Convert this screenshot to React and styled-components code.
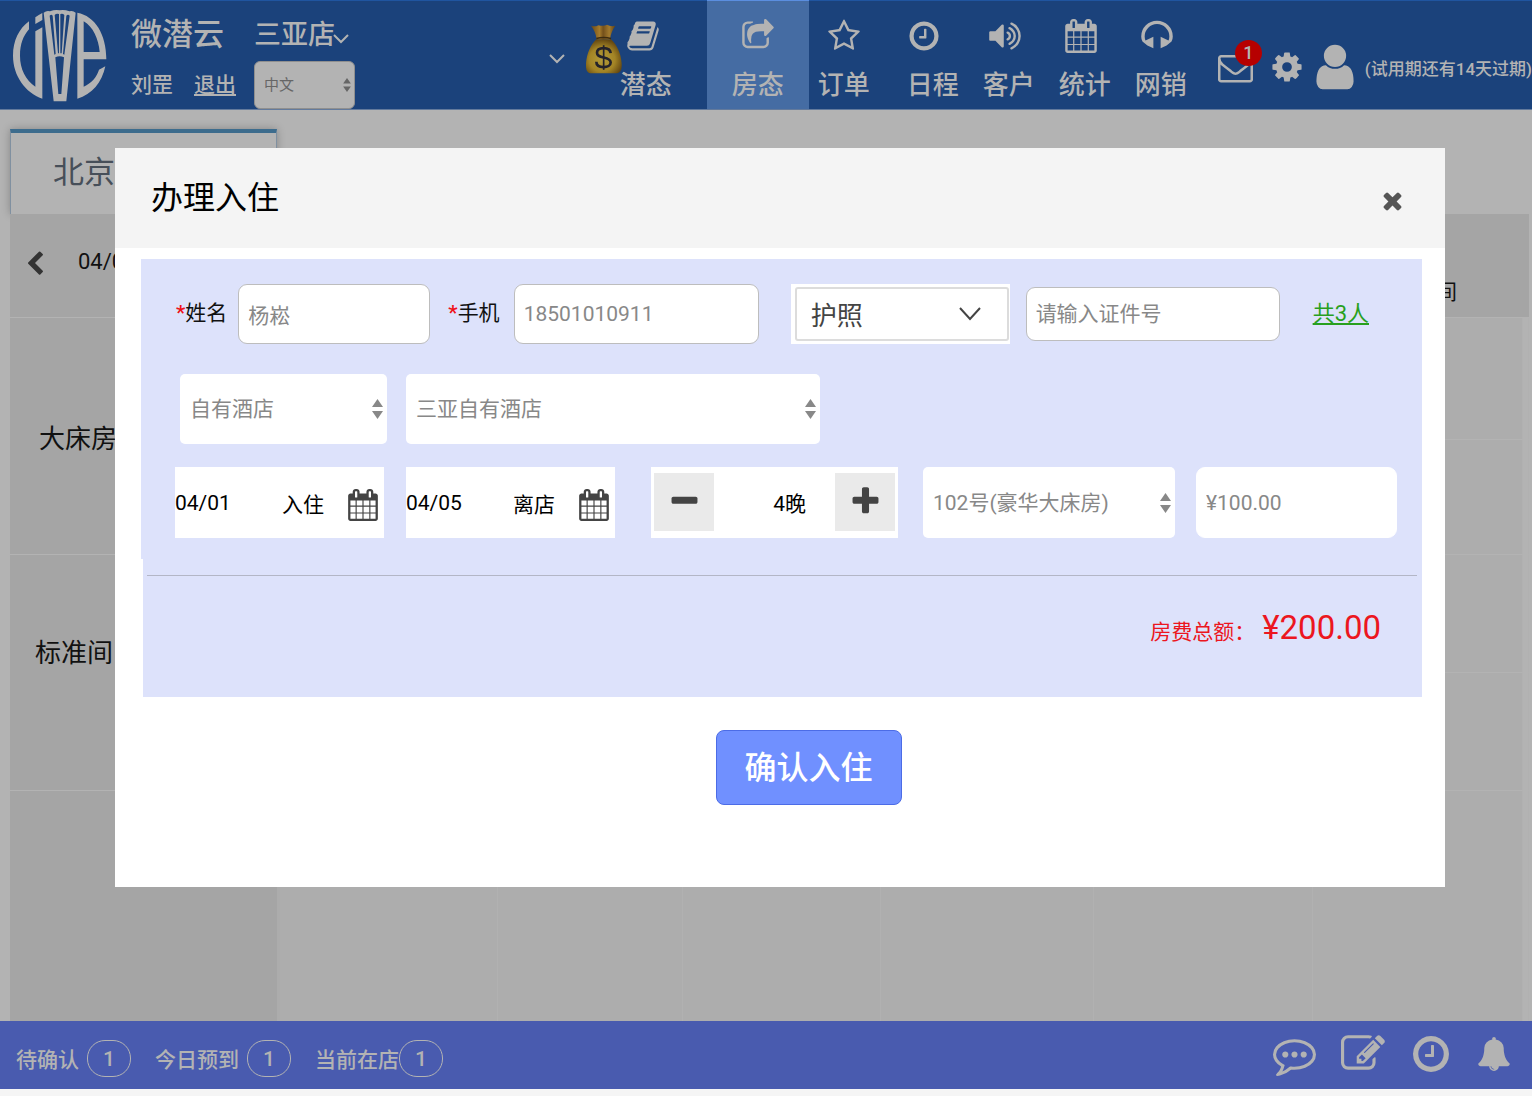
import React, { useState } from 'react';
import styled, { createGlobalStyle } from 'styled-components';

const paths = {
  book: 'M1703 478q40 57 18 129l-275 906q-19 64-76.5 107.5t-122.5 43.5h-923q-77 0-148.5-53.5t-99.5-131.5q-24-67-2-127 0-4 3-27t4-37q1-8-3-21.5t-3-19.5q2-11 8-21t16.5-23.5 16.5-23.5q23-38 45-91.5t30-91.5q3-10 .5-30t-.5-28q3-11 17-28t17-23q21-36 42-92t25-90q1-9-2.5-32t.5-28q4-13 22-30.5t22-22.5q19-26 42.5-84.5t27.5-96.5q1-8-3-25.5t-2-26.5q2-8 9-18t18-23 17-21q8-12 16.5-30.5t15-35 16-36 19.5-32 26.5-23.5 36-11.5 47.5 5.5l-1 3q38-9 51-9h761q74 0 114 56t18 130l-274 906q-36 119-71.5 153.5t-128.5 34.5h-869q-27 0-38 15-11 16-1 43 24 70 144 70h923q29 0 56-15.5t35-41.5l300-987q7-22 5-57 38 15 59 43zm-1064 2q-4 13 2 22.5t20 9.5h608q13 0 25.5-9.5t16.5-22.5l21-64q4-13-2-22.5t-20-9.5h-608q-13 0-25.5 9.5t-16.5 22.5zm-83 256q-4 13 2 22.5t20 9.5h608q13 0 25.5-9.5t16.5-22.5l21-64q4-13-2-22.5t-20-9.5h-608q-13 0-25.5 9.5t-16.5 22.5z',
  share: 'M1472 989v259q0 119-84.5 203.5t-203.5 84.5h-832q-119 0-203.5-84.5t-84.5-203.5v-832q0-119 84.5-203.5t203.5-84.5h255q13 0 22.5 9.5t9.5 22.5q0 27-26 32-77 26-133 60-10 4-16 4h-112q-66 0-113 47t-47 113v832q0 66 47 113t113 47h832q66 0 113-47t47-113v-214q0-19 18-29 28-13 54-37 16-16 35-8 21 9 21 29zm237-496l-384 384q-18 19-45 19-12 0-25-5-39-17-39-59v-192h-160q-323 0-438 131-119 137-74 473 3 23-20 34-8 2-12 2-16 0-26-13-10-14-21-31t-39.5-68.5-49.5-99.5-38.5-114-17.5-122q0-49 3.5-91t14-90 28-88 47-81.5 68.5-74 94.5-61.5 124.5-48.5 159.5-30.5 196.5-11h160v-192q0-42 39-59 13-5 25-5 26 0 45 19l384 384q19 19 19 45t-19 45z',
  star: 'M1201 1004l306-297-422-62-189-382-189 382-422 62 306 297-73 421 378-199 377 199zm527-357q0 22-26 48l-363 354 86 500q1 7 1 20 0 50-41 50-19 0-40-12l-449-236-449 236q-22 12-40 12-21 0-31.5-14.5t-10.5-35.5q0-6 2-20l86-500-364-354q-25-27-25-48 0-37 56-46l502-73 225-455q19-41 49-41t49 41l225 455 502 73q56 9 56 46z',
  clock: 'M1024 544v448q0 14-9 23t-23 9h-320q-14 0-23-9t-9-23v-64q0-14 9-23t23-9h224v-352q0-14 9-23t23-9h64q14 0 23 9t9 23zm416 352q0-148-73-273t-198-198-273-73-273 73-198 198-73 273 73 273 198 198 273 73 273-73 198-198 73-273zm224 0q0 209-103 385.5t-279.5 279.5-385.5 103-385.5-103-279.5-279.5-103-385.5 103-385.5 279.5-279.5 385.5-103 385.5 103 279.5 279.5 103 385.5z',
  volume: 'M832 352v1088q0 26-19 45t-45 19-45-19l-333-333h-262q-26 0-45-19t-19-45v-384q0-26 19-45t45-19h262l333-333q19-19 45-19t45 19 19 45zm384 544q0 76-42.5 141.5t-112.5 93.5q-10 5-25 5-26 0-45-18.5t-19-45.5q0-21 12-35.5t29-25 34-23 29-36 12-56.5-12-56.5-29-36-34-23-29-25-12-35.5q0-27 19-45.5t45-18.5q15 0 25 5 70 27 112.5 93t42.5 142zm256 0q0 153-85 282.5t-225 188.5q-13 5-25 5-27 0-46-19t-19-45q0-39 39-59 56-29 76-44 74-54 115.5-135.5t41.5-173.5-41.5-173.5-115.5-135.5q-20-15-76-44-39-20-39-59 0-26 19-45t45-19q13 0 26 5 140 59 225 188.5t85 282.5zm256 0q0 230-127 422.5t-338 283.5q-13 5-26 5-26 0-45-19t-19-45q0-36 39-59 7-4 22.5-10.5t22.5-10.5q46-25 82-51 123-91 192-227t69-289-69-289-192-227q-36-26-82-51-7-4-22.5-10.5t-22.5-10.5q-39-23-39-59 0-26 19-45t45-19q13 0 26 5 211 91 338 283.5t127 422.5z',
  calendar: 'M192 1664h288v-288h-288v288zm352 0h320v-288h-320v288zm-352-352h288v-320h-288v320zm352 0h320v-320h-320v320zm-352-384h288v-288h-288v288zm736 736h320v-288h-320v288zm-384-736h320v-288h-320v288zm768 736h288v-288h-288v288zm-384-352h320v-320h-320v320zm-352-864v-288q0-13-9.5-22.5t-22.5-9.5h-64q-13 0-22.5 9.5t-9.5 22.5v288q0 13 9.5 22.5t22.5 9.5h64q13 0 22.5-9.5t9.5-22.5zm736 864h288v-320h-288v320zm-384-384h320v-288h-320v288zm384 0h288v-288h-288v288zm32-480v-288q0-13-9.5-22.5t-22.5-9.5h-64q-13 0-22.5 9.5t-9.5 22.5v288q0 13 9.5 22.5t22.5 9.5h64q13 0 22.5-9.5t9.5-22.5zm384-64v1280q0 52-38 90t-90 38h-1408q-52 0-90-38t-38-90v-1280q0-52 38-90t90-38h128v-96q0-66 47-113t113-47h64q66 0 113 47t47 113v96h384v-96q0-66 47-113t113-47h64q66 0 113 47t47 113v96h128q52 0 90 38t38 90z',
  headphones: 'M64 920a832 832 0 0 1 1664 0Q1728 1070 1662 1190L1402 1400L1087 1545V930L1500 1130Q1546 1030 1546 920A650 650 0 0 0 246 920Q246 1030 292 1130L705 930V1545L390 1400L130 1190Q64 1070 64 920Z',
  envelope: 'M1664 1504v-768q-32 36-69 66-268 206-426 338-51 43-83 67t-86.5 48.5-102.5 24.5h-2q-48 0-102.5-24.5t-86.5-48.5-83-67q-158-132-426-338-37-30-69-66v768q0 13 9.5 22.5t22.5 9.5h1472q13 0 22.5-9.5t9.5-22.5zm0-1051v-24.5l-.5-13-3-12.5-5.5-9-9-7.5-14-2.5h-1472q-13 0-22.5 9.5t-9.5 22.5q0 168 147 284 193 152 401 317 6 5 35 29.5t46 37.5 44.5 31.5 50.5 27.5 43 9h2q20 0 43-9t50.5-27.5 44.5-31.5 46-37.5 35-29.5q208-165 401-317 54-43 100.5-115.5t46.5-131.5zm128-37v1088q0 66-47 113t-113 47h-1472q-66 0-113-47t-47-113v-1088q0-66 47-113t113-47h1472q66 0 113 47t47 113z',
  cog: 'M1152 896q0-106-75-181t-181-75-181 75-75 181 75 181 181 75 181-75 75-181zm512-109v222q0 12-8 23t-20 13l-185 28q-19 54-39 91 35 50 107 138 10 12 10 25t-9 23q-27 37-99 108t-94 71q-12 0-26-9l-138-108q-44 23-91 38-16 136-29 186-7 28-36 28h-222q-14 0-24.5-8.5t-11.5-21.5l-28-184q-49-16-90-37l-141 107q-10 9-25 9-14 0-25-11-126-114-165-168-7-10-7-23 0-12 8-23 15-21 51-66.5t54-70.5q-27-50-41-99l-183-27q-13-2-21-12.5t-8-23.5v-222q0-12 8-23t19-13l186-28q14-46 39-92-40-57-107-138-10-12-10-24 0-10 9-23 26-36 98.5-107.5t94.5-71.5q13 0 26 10l138 107q44-23 91-38 16-136 29-186 7-28 36-28h222q14 0 24.5 8.5t11.5 21.5l28 184q49 16 90 37l142-107q9-9 24-9 13 0 25 10 129 119 165 170 7 8 7 22 0 12-8 23-15 21-51 66.5t-54 70.5q26 50 41 98l183 28q13 2 21 12.5t8 23.5z',
  user: 'M1536 1399q0 109-62.5 187t-150.5 78h-854q-88 0-150.5-78t-62.5-187q0-85 8.5-160.5t31.5-152 58.5-131 94-89 134.5-34.5q131 128 313 128t313-128q76 0 134.5 34.5t94 89 58.5 131 31.5 152 8.5 160.5zm-256-887q0 159-112.5 271.5t-271.5 112.5-271.5-112.5-112.5-271.5 112.5-271.5 271.5-112.5 271.5 112.5 112.5 271.5z',
  comment: 'M640 896q0 53-37.5 90.5t-90.5 37.5-90.5-37.5-37.5-90.5 37.5-90.5 90.5-37.5 90.5 37.5 37.5 90.5zm384 0q0 53-37.5 90.5t-90.5 37.5-90.5-37.5-37.5-90.5 37.5-90.5 90.5-37.5 90.5 37.5 37.5 90.5zm384 0q0 53-37.5 90.5t-90.5 37.5-90.5-37.5-37.5-90.5 37.5-90.5 90.5-37.5 90.5 37.5 37.5 90.5zm-512-512q-204 0-381.5 69.5t-282 187.5-104.5 255q0 112 71.5 213.5t201.5 175.5l87 50-27 96q-24 91-70 172 152-63 275-171l43-38 57 6q69 8 130 8 204 0 381.5-69.5t282-187.5 104.5-255-104.5-255-282-187.5-381.5-69.5zm896 512q0 174-120 321.5t-326 233-450 85.5q-70 0-145-8-198 175-460 242-49 14-114 22h-5q-15 0-27-10.5t-16-27.5v-1q-3-4-.5-12t2-10 4.5-9.5l6-9 7-8.5 8-9q7-8 31-34.5t34.5-38 31-39.5 32.5-51 27-59 26-76q-157-89-247.5-220t-90.5-281q0-174 120-321.5t326-233 450-85.5 450 85.5 326 233 120 321.5z',
  edit: 'M888 1184l116-116-152-152-116 116v56h96v96h56zm440-720q-16-16-33 1l-350 350q-17 17-1 33t33-1l350-350q17-17 1-33zm80 594v190q0 119-84.5 203.5t-203.5 84.5h-832q-119 0-203.5-84.5t-84.5-203.5v-832q0-119 84.5-203.5t203.5-84.5h832q63 0 117 25 15 7 18 23 3 17-9 29l-49 49q-14 14-32 8-23-6-45-6h-832q-66 0-113 47t-47 113v832q0 66 47 113t113 47h832q66 0 113-47t47-113v-126q0-13 9-22l64-64q15-15 35-7t20 29zm-96-738l288 288-672 672h-288v-288zm444 132l-92 92-288-288 92-92q28-28 68-28t68 28l152 152q28 28 28 68t-28 68z',
  bell: 'M912 1696q0-16-16-16-59 0-101.5-42.5t-42.5-101.5q0-16-16-16t-16 16q0 73 51.5 124.5t124.5 51.5q16 0 16-16zm816-288q0 52-38 90t-90 38h-448q0 106-75 181t-181 75-181-75-75-181h-448q-52 0-90-38t-38-90q50-42 91-88t85-119.5 74.5-158.5 50-206 19.5-260q0-152 117-282.5t307-158.5q-8-19-8-39 0-40 28-68t68-28 68 28 28 68q0 20-8 39 190 28 307 158.5t117 282.5q0 139 19.5 260t50 206 74.5 158.5 85 119.5 91 88z',
  times: 'M1490 1322q0 40-28 68l-136 136q-28 28-68 28t-68-28l-294-294-294 294q-28 28-68 28t-68-28l-136-136q-28-28-28-68t28-68l294-294-294-294q-28-28-28-68t28-68l136-136q28-28 68-28t68 28l294 294 294-294q28-28 68-28t68 28l136 136q28 28 28 68t-28 68l-294 294 294 294q28 28 28 68z',
  plus: 'M1600 736v192q0 40-28 68t-68 28h-416v416q0 40-28 68t-68 28h-192q-40 0-68-28t-28-68v-416h-416q-40 0-68-28t-28-68v-192q0-40 28-68t68-28h416v-416q0-40 28-68t68-28h192q40 0 68 28t28 68v416h416q40 0 68 28t28 68z',
  minus: 'M1600 736v192q0 40-28 68t-68 28h-1216q-40 0-68-28t-28-68v-192q0-40 28-68t68-28h1216q40 0 68 28t28 68z',
  left: 'M1427 301l-531 531 531 531q19 19 19 45t-19 45l-166 166q-19 19-45 19t-45-19l-742-742q-19-19-19-45t19-45l742-742q19-19 45-19t45 19l166 166q19 19 19 45t-19 45z',
};

const Icon = ({ name, size = 34 }) => (
  <svg width={size} height={size} viewBox="0 0 1792 1792" fill="currentColor" aria-hidden="true">
    <path d={paths[name]} />
  </svg>
);

const Caret = ({ width = 16, height = 10, stroke = 2 }) => (
  <svg width={width} height={height} viewBox={`0 0 ${width} ${height}`} fill="none" stroke="currentColor" strokeWidth={stroke} aria-hidden="true">
    <path d={`M1 1L${width / 2} ${height - 2}L${width - 1} 1`} />
  </svg>
);

const Arrows = ({ width = 11, height = 20 }) => (
  <svg width={width} height={height} viewBox="0 0 11 20" fill="currentColor" aria-hidden="true">
    <path d="M5.5 0L11 8H0ZM5.5 20L11 12H0Z" />
  </svg>
);

const Logo = () => (
  <svg width="94" height="92" viewBox="38 28 282 276" fill="#b3b3b3" role="img" aria-label="LIVE">
    <path d="M86 62C56 84 38 120 38 165C38 225 75 276 126 294V80L105 92V258C76 238 59 205 59 165C59 130 69 105 86 86Z" />
    <path d="M105 50Q115 42 126 37V58L105 70Z" />
    <path
      fillRule="evenodd"
      d="M130 36Q140 28 149 32Q164 26 178 29Q192 26 207 32Q217 28 226 36L198 302H160ZM148 45L162 162L166 160L157 45Q153 40 148 45ZM163 43L173 158H176V40Q168 37 163 43ZM180 40V158H184L192 43Q187 37 180 40ZM198 45L188 160L192 162L208 45Q203 40 198 45ZM165 170L174 280H183L191 170Q178 164 165 170Z"
    />
    <path
      fillRule="evenodd"
      d="M231 36C284 46 318 100 318 176H250V258C274 246 289 230 296 207L315 197C305 245 275 282 231 294ZM250 62V154H298C295 115 278 78 250 62Z"
    />
  </svg>
);

const MoneyBag = () => (
  <svg width="36" height="50" viewBox="147 73 108 149" aria-hidden="true">
    <defs>
      <radialGradient id="bag" cx="0.45" cy="0.6" r="0.6">
        <stop offset="0" stopColor="#b39b39" />
        <stop offset="0.6" stopColor="#a38425" />
        <stop offset="1" stopColor="#644711" />
      </radialGradient>
      <linearGradient id="neck" x1="0" x2="1" y1="0" y2="0">
        <stop offset="0" stopColor="#6a4815" />
        <stop offset="0.35" stopColor="#a57b2c" />
        <stop offset="0.5" stopColor="#74501b" />
        <stop offset="0.75" stopColor="#a27a2e" />
        <stop offset="1" stopColor="#614010" />
      </linearGradient>
    </defs>
    <path fill="url(#bag)" d="M178 118C160 135 150 160 147 190Q145 219 160 220H240Q256 218 254 190C252 160 240 135 222 118Z" />
    <path fill="url(#neck)" d="M162 78Q174 82 184 76Q200 80 210 75Q222 82 235 78Q222 96 219 118H179Q176 96 162 78Z" />
    <path d="M178 116Q200 110 222 116" fill="none" stroke="#3c2b10" strokeWidth="4" />
    <path d="M221 160C220 149 211 145 200 145C188 145 180 150 180 159C180 168 187 171 200 173C214 176 221 179 221 188C221 197 211 202 200 202C187 202 178 197 178 186" fill="none" stroke="#24222b" strokeWidth="8" />
    <path d="M200 136V210" stroke="#24222b" strokeWidth="5" />
  </svg>
);

const GlobalStyle = createGlobalStyle`
  * { box-sizing: border-box; }
  body {
    margin: 0;
    overflow: hidden;
    background: #f5f5f5;
    font-family: Roboto, "Noto Sans CJK SC", sans-serif;
    font-size: 21px;
    color: #111;
  }
  button, input, select {
    font: inherit;
    color: inherit;
    margin: 0;
    padding: 0;
    border: 0;
    background: none;
    outline: none;
  }
  button { cursor: pointer; }
  svg { display: block; flex: none; }
`;

const Page = styled.div`
  display: flex;
  flex-direction: column;
  min-height: 100vh;
  padding-bottom: 7px;
`;

const TopBar = styled.header`
  display: flex;
  align-items: stretch;
  height: 110px;
  padding-left: 13px;
  background: #1b427b;
  border-top: 1px solid #2055a0;
  border-bottom: 1px solid #637a9c;
  color: #b3b3b3;
  font-weight: 500;
  white-space: nowrap;
`;

const LogoBox = styled.div`
  padding-top: 9px;
  margin-right: 24px;
`;

const Brand = styled.div`
  display: grid;
  grid-template-columns: 103px 101px;
  grid-template-rows: 60px 48px;
  column-gap: 20px;
`;

const BrandName = styled.div`
  align-self: center;
  padding-top: 8px;
  font-size: 31px;
  line-height: 40px;
`;

const StoreButton = styled.button`
  display: flex;
  align-items: center;
  padding-top: 8px;
  font-size: 27px;
  line-height: 40px;

  svg { margin: 8px 0 0 -2px; }
`;

const Account = styled.div`
  display: flex;
  align-items: center;
  gap: 21px;
  line-height: 32px;

  a { color: inherit; }
`;

const SelectBox = styled.div`
  display: grid;
  align-items: center;
  flex: ${(p) => (p.$width ? `0 1 ${p.$width}px` : 'none')};
  height: ${(p) => p.$height || 70}px;
  margin-left: ${(p) => p.$before || 0}px;
  color: #888;

  > * { grid-area: 1 / 1; }

  > svg {
    justify-self: end;
    margin-right: 4px;
    pointer-events: none;
  }

  select {
    appearance: none;
    width: 100%;
    height: 100%;
    padding-left: 10px;
    border-radius: 5px;
    background: #fff;
  }
`;

const LanguageBox = styled(SelectBox)`
  color: #666;
  font-size: 15px;
  font-weight: 400;

  select {
    padding-left: 9px;
    background: #b3b3b3;
    border: 1px solid #8f8f8f;
    border-radius: 6px;
  }
`;

const Nav = styled.nav`
  display: flex;
  margin-left: auto;
`;

const MoreButton = styled.button`
  display: flex;
  align-items: center;
  padding-top: 8px;
  margin-right: 21px;
`;

const BagBox = styled.div`
  padding-top: 23px;
  margin-right: -2px;
`;

const NavLink = styled.a`
  position: relative;
  display: flex;
  flex-direction: column;
  align-items: ${(p) => (p.$centered ? 'center' : 'flex-start')};
  width: ${(p) => (p.$active ? 102 : 54)}px;
  margin-left: ${(p) => p.$gap || 0}px;
  padding-top: 18px;
  background: ${(p) => (p.$active ? '#456ca3' : 'none')};
  box-shadow: ${(p) => (p.$active ? '0 -1px #5b8edf' : 'none')};
  color: inherit;
  text-decoration: none;
  font-size: 26px;
  line-height: 32px;

  svg { margin: 0 0 16px ${(p) => p.$inset || 0}px; }
`;

const Tools = styled.div`
  display: flex;
  align-items: center;
  padding-top: 24px;
  margin-left: ${(p) => p.$before}px;
`;

const ToolButton = styled.button`
  position: relative;
  display: flex;
  align-items: center;
  justify-content: center;
  width: ${(p) => p.$width}px;
  height: 52px;
`;

const Badge = styled.span`
  position: absolute;
  left: 17px;
  top: -1px;
  width: 27px;
  height: 26px;
  border-radius: 50%;
  background: #b60000;
  font-size: 18px;
  line-height: 26px;
  text-align: center;
`;

const Trial = styled.span`
  margin-left: 8px;
  font-size: 17px;
`;

const Main = styled.main`
  flex: 1;
  padding: 19px 3px 0 10px;
  background: #b3b3b3;
`;

const StoreTab = styled.div`
  width: 267px;
  height: 85px;
  padding: 20px 0 0 42px;
  overflow: hidden;
  border-top: 4px solid #3d6c8d;
  border-left: 1px solid #8090a0;
  border-right: 1px solid #8090a0;
  box-shadow: 0 0 8px rgba(0, 0, 0, 0.25);
  color: #474f59;
  font-size: 31px;
  line-height: 40px;
`;

const Rooms = styled.table`
  position: relative;
  width: 100%;
  table-layout: fixed;
  border-spacing: 0;
  background: #b3b3b3;

  th, td {
    padding: 0;
    background: #adadad;
    border-right: 1px solid #b1b1b1;
    border-bottom: 1px solid #b3b3b3;
    font-weight: 400;
  }

  td:last-child { background: #b3b3b3; }

  thead th { background: #a5a5a5; border-right: 0; }

  tbody tr:last-child > * { border-bottom: 0; }
`;

const Row = styled.tr`
  height: ${(p) => p.$height}px;

  tbody > & > th {
    padding: 0 0 ${(p) => p.$lift || 0}px ${(p) => p.$inset || 0}px;
    background: #a5a5a5;
    border-right: 3px solid #acacac;
    font-size: 26px;
    text-align: left;
  }
`;

const DateHead = styled.div`
  display: flex;
  align-items: center;
  gap: 30px;
  padding: 0 0 8px 12px;
  font-size: 22px;

  button {
    padding-top: 4px;
    color: #333;
  }
`;

const Count = styled.div`
  padding: 48px 66px 0 0;
  text-align: right;
`;

const Footer = styled.footer`
  display: flex;
  align-items: center;
  height: 68px;
  padding: 6px 21px 0 16px;
  background: #495baf;
  color: #b3b3b3;
  font-weight: 500;
`;

const Stat = styled.div`
  display: flex;
  align-items: center;
  gap: ${(p) => p.$gap}px;
  margin-right: 24px;
`;

const Pill = styled.span`
  width: 44px;
  height: 37px;
  border: 1px solid currentColor;
  border-radius: 18px;
  line-height: 36px;
  text-align: center;
`;

const FooterTools = styled.div`
  display: flex;
  align-items: center;
  gap: 25px;
  margin-left: auto;
  padding-bottom: 8px;
`;

const Overlay = styled.div`
  position: absolute;
  inset: 0;
  padding: 148px 87px 0 115px;
`;

const Dialog = styled.section`
  min-height: 739px;
  background: #fff;
`;

const DialogHead = styled.div`
  display: flex;
  align-items: center;
  justify-content: space-between;
  height: 100px;
  padding: 0 39px 0 36px;
  background: #f4f4f4;
  color: #555;

  h1 {
    margin: 0;
    padding-bottom: 6px;
    font-size: 32px;
    font-weight: 400;
    color: #000;
  }

  button { padding-top: 4px; }
`;

const DialogBody = styled.form`
  padding: 11px 23px 0 26px;
`;

const Fields = styled.div`
  display: flex;
  flex-direction: column;
  height: 300px;
  padding: 25px 25px 0 34px;
  background: #dde2fb;
`;

const FieldRow = styled.div`
  display: flex;
  align-items: center;
  padding-left: ${(p) => p.$inset || 0}px;
  margin-bottom: ${(p) => p.$below || 0}px;
`;

const FieldLabel = styled.label`
  flex: none;
  margin: 0 11px 6px ${(p) => p.$before || 0}px;

  b {
    color: #f01018;
    font-weight: 500;
  }
`;

const TextInput = styled.input`
  flex: 0 1 ${(p) => p.$width}px;
  min-width: 0;
  height: ${(p) => p.$height || 60}px;
  margin-left: ${(p) => p.$before || 0}px;
  padding: 0 9px;
  border: 1px solid ${(p) => (p.$plain ? '#fff' : '#bdbdbd')};
  border-radius: 9px;
  background: #fff;
  color: #888;

  &::placeholder {
    color: #888;
    opacity: 1;
  }
`;

const IdTypeBox = styled(SelectBox)`
  margin: 0 16px 0 32px;
  padding: 3px 1px 3px 4px;
  background: #fff;
  color: #444;
  font-size: 26px;

  select {
    padding: 4px 0 0 14px;
    border: 2px solid #dcdcdc;
    border-radius: 3px;
  }

  > svg { margin-right: 28px; }
`;

const GuestLink = styled.a`
  margin: 0 0 6px 33px;
  color: #28a01e;
  font-size: 22px;
  white-space: nowrap;
`;

const DateField = styled.div`
  display: flex;
  align-items: center;
  flex: 0 1 209px;
  height: 71px;
  margin-right: ${(p) => p.$after}px;
  background: #fff;
  color: #000;

  input {
    width: 107px;
    min-width: 0;
  }

  label { flex: none; }

  button {
    margin-left: 23px;
    padding-top: 4px;
    color: #444;
  }
`;

const Stepper = styled.div`
  display: flex;
  align-items: center;
  flex: 0 1 247px;
  height: 71px;
  margin-right: 25px;
  padding: 0 3px 2px;
  background: #fff;
  color: #000;

  button {
    display: flex;
    align-items: center;
    justify-content: center;
    width: 60px;
    height: 58px;
    background: #eaeaea;
    color: #444;
  }

  output {
    flex: 1;
    padding-right: 29px;
    text-align: right;
  }
`;

const Total = styled.div`
  height: 138px;
  margin-left: 2px;
  padding: 16px 5px 0 4px;
  background: #dde2fb;
  color: #ec1620;
`;

const TotalLine = styled.div`
  display: flex;
  align-items: baseline;
  justify-content: flex-end;
  gap: 7px;
  padding: 32px 36px 0 0;
  border-top: 1px solid #b3b6c6;

  strong {
    font-size: 33px;
    line-height: 40px;
    font-weight: 400;
  }
`;

const Actions = styled.div`
  display: flex;
  justify-content: center;
  padding: 33px 0 0 54px;
`;

const ConfirmButton = styled.button`
  width: 186px;
  height: 75px;
  padding-bottom: 6px;
  border: 1px solid #4c6ce6;
  border-radius: 8px;
  background: #7090ff;
  color: #fff;
  font-size: 32px;
  font-weight: 500;
`;

const navItems = [
  { label: '潜态', icon: 'book', inset: 6 },
  { label: '房态', icon: 'share', gap: 33, active: true, centered: true },
  { label: '订单', icon: 'star', gap: 8, centered: true },
  { label: '日程', icon: 'clock', gap: 36 },
  { label: '客户', icon: 'volume', gap: 22, inset: 5 },
  { label: '统计', icon: 'calendar', gap: 22, inset: 5 },
  { label: '网销', icon: 'headphones', gap: 22, inset: 5 },
];

const stats = [
  { label: '待确认', count: 1, gap: 8 },
  { label: '今日预到', count: 1, gap: 8 },
  { label: '当前在店', count: 1, gap: 0 },
];

const columns = [270, 218, 185, 198, 213, 219, 210, 6];

const cells = (n) => Array.from({ length: n }, (_, i) => <td key={i} />);

export default function App() {
  const [nights, setNights] = useState(4);
  return (
    <>
      <GlobalStyle />
      <Page>
        <TopBar>
          <LogoBox><Logo /></LogoBox>
          <Brand>
            <BrandName>微潜云</BrandName>
            <StoreButton type="button">三亚店<Caret /></StoreButton>
            <Account>
              <span>刘罡</span>
              <a href="#logout">退出</a>
            </Account>
            <LanguageBox $height={48}>
              <select aria-label="语言"><option>中文</option></select>
              <Arrows width={8} height={14} />
            </LanguageBox>
          </Brand>
          <Nav>
            <MoreButton type="button" aria-label="更多"><Caret /></MoreButton>
            <BagBox><MoneyBag /></BagBox>
            {navItems.map((n) => (
              <NavLink key={n.label} href="#nav" $gap={n.gap} $active={n.active} $centered={n.centered} $inset={n.inset}>
                <Icon name={n.icon} />
                {n.label}
              </NavLink>
            ))}
          </Nav>
          <Tools $before={29}>
            <ToolButton type="button" $width={35} aria-label="消息">
              <Icon name="envelope" size={35} />
              <Badge>1</Badge>
            </ToolButton>
            <ToolButton type="button" $width={68} aria-label="设置"><Icon name="cog" /></ToolButton>
            <ToolButton type="button" $width={28} aria-label="账户"><Icon name="user" size={52} /></ToolButton>
            <Tools as="span" $before={8} />
            <Trial>(试用期还有14天过期)</Trial>
          </Tools>
        </TopBar>

        <Main>
          <StoreTab>北京大</StoreTab>
          <Rooms>
            <colgroup>
              {columns.map((w, i) => <col key={i} width={w} />)}
            </colgroup>
            <thead>
              <Row $height={104}>
                <th>
                  <DateHead>
                    <button type="button" aria-label="上一页"><Icon name="left" size={26} /></button>
                    04/01
                  </DateHead>
                </th>
                <th colSpan={5} />
                <th><Count>1间</Count></th>
                <th />
              </Row>
            </thead>
            <tbody>
              <Row $height={122} $inset={29}><th rowSpan={2}>大床房</th>{cells(7)}</Row>
              <Row $height={115}>{cells(7)}</Row>
              <Row $height={118} $inset={25} $lift={44}><th rowSpan={2}>标准间</th>{cells(7)}</Row>
              <Row $height={118}>{cells(7)}</Row>
              <Row $height={230}><th />{cells(7)}</Row>
            </tbody>
          </Rooms>
        </Main>

        <Footer>
          {stats.map((s) => (
            <Stat key={s.label} $gap={s.gap}>
              {s.label}
              <Pill>{s.count}</Pill>
            </Stat>
          ))}
          <FooterTools>
            <button type="button" aria-label="留言"><Icon name="comment" size={43} /></button>
            <button type="button" aria-label="编辑"><Icon name="edit" size={44} /></button>
            <button type="button" aria-label="时间"><Icon name="clock" size={42} /></button>
            <button type="button" aria-label="通知"><Icon name="bell" size={34} /></button>
          </FooterTools>
        </Footer>
      </Page>

      <Overlay>
        <Dialog role="dialog" aria-labelledby="dialog-title">
          <DialogHead>
            <h1 id="dialog-title">办理入住</h1>
            <button type="button" aria-label="关闭"><Icon name="times" size={27} /></button>
          </DialogHead>
          <DialogBody onSubmit={(e) => e.preventDefault()}>
            <Fields>
              <FieldRow $below={30} $inset={1}>
                <FieldLabel htmlFor="name"><b>*</b>姓名</FieldLabel>
                <TextInput id="name" defaultValue="杨崧" $width={192} />
                <FieldLabel htmlFor="phone" $before={18}><b>*</b>手机</FieldLabel>
                <TextInput id="phone" defaultValue="18501010911" $width={245} $before={3} />
                <IdTypeBox $width={219} $height={60}>
                  <select aria-label="证件类型"><option>护照</option></select>
                  <Caret width={22} height={14} stroke={2} />
                </IdTypeBox>
                <TextInput aria-label="证件号" placeholder="请输入证件号" $width={254} $height={54} />
                <GuestLink href="#guests">共3人</GuestLink>
              </FieldRow>
              <FieldRow $inset={5} $below={23}>
                <SelectBox $width={207}>
                  <select aria-label="酒店类型"><option>自有酒店</option></select>
                  <Arrows />
                </SelectBox>
                <SelectBox $width={414} $before={19}>
                  <select aria-label="酒店"><option>三亚自有酒店</option></select>
                  <Arrows />
                </SelectBox>
              </FieldRow>
              <FieldRow>
                <DateField $after={22}>
                  <input id="checkin" defaultValue="04/01" />
                  <label htmlFor="checkin">入住</label>
                  <button type="button" aria-label="选择入住日期"><Icon name="calendar" size={32} /></button>
                </DateField>
                <DateField $after={36}>
                  <input id="checkout" defaultValue="04/05" />
                  <label htmlFor="checkout">离店</label>
                  <button type="button" aria-label="选择离店日期"><Icon name="calendar" size={32} /></button>
                </DateField>
                <Stepper>
                  <button type="button" aria-label="减少" onClick={() => setNights(Math.max(1, nights - 1))}><Icon name="minus" size={33} /></button>
                  <output>{nights}晚</output>
                  <button type="button" aria-label="增加" onClick={() => setNights(nights + 1)}><Icon name="plus" size={33} /></button>
                </Stepper>
                <SelectBox $width={252} $height={71}>
                  <select aria-label="房间"><option>102号(豪华大床房)</option></select>
                  <Arrows />
                </SelectBox>
                <TextInput aria-label="房费" defaultValue="¥100.00" $plain $width={201} $height={71} $before={21} />
              </FieldRow>
            </Fields>
            <Total>
              <TotalLine>
                <span>房费总额：</span>
                <strong>¥200.00</strong>
              </TotalLine>
            </Total>
            <Actions>
              <ConfirmButton type="submit">确认入住</ConfirmButton>
            </Actions>
          </DialogBody>
        </Dialog>
      </Overlay>
    </>
  );
}
